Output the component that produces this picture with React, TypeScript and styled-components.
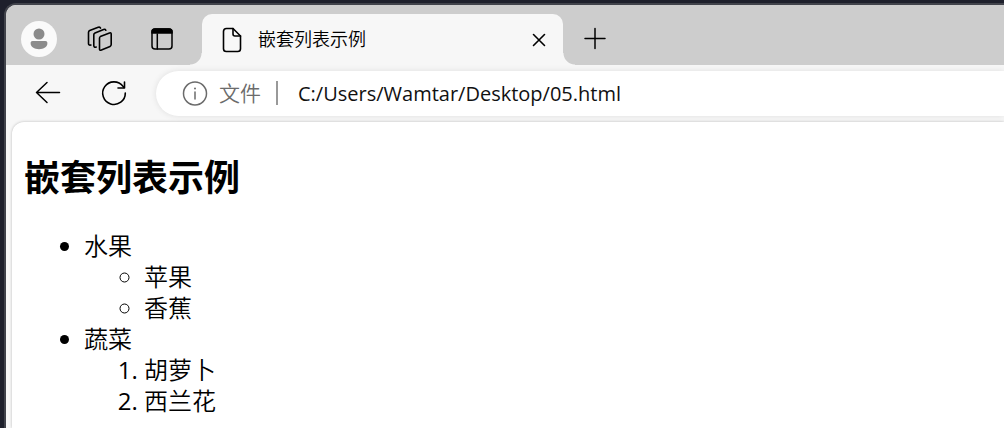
import React from "react";
import styled, { createGlobalStyle } from "styled-components";

const GlobalStyle = createGlobalStyle`
  *, *::before, *::after { box-sizing: border-box; }
  body {
    margin: 0;
    background: #1e202c;
    color: #000;
    font-family: "Open Sans", "Noto Sans CJK SC", sans-serif;
    font-weight: 350;
  }
`;

const Desktop = styled.div`
  display: flex;
  min-height: 100vh;
  padding: 3px 0 0 4px;
`;

const BrowserWindow = styled.div`
  flex: 1;
  min-width: 0;
  display: flex;
  flex-direction: column;
  overflow: hidden;
  border: 2px solid #41434b;
  border-width: 2px 0 0 2px;
  border-top-left-radius: 12px;
  background: #f7f7f7;
`;

const TabStrip = styled.header`
  display: flex;
  height: 60px;
  padding-left: 15px;
  background: #cdcdcd;
`;

const StripTools = styled.div`
  display: flex;
  gap: 25px;
  padding-top: 16px;
`;

const IconButton = styled.button<{ $size?: number }>`
  flex: none;
  display: grid;
  place-items: center;
  width: ${(p) => p.$size ?? 36}px;
  height: ${(p) => p.$size ?? 36}px;
  padding: 0;
  border: 0;
  background: none;
  color: #000;
`;

const Avatar = styled(IconButton)`
  border-radius: 50%;
  background: #fafafa;
`;

const Tab = styled.div`
  position: relative;
  flex: 0 1 361px;
  display: flex;
  align-items: center;
  gap: 14px;
  margin: 9px 14px 0 23px;
  padding: 0 12px 0 18px;
  border-radius: 10px 10px 0 0;
  background: #f7f7f7;

  &::before,
  &::after {
    content: "";
    position: absolute;
    bottom: 0;
    width: 12px;
    height: 12px;
  }
  &::before {
    right: 100%;
    background: radial-gradient(circle at 0 0, transparent 11px, #f7f7f7 12px);
  }
  &::after {
    left: 100%;
    background: radial-gradient(circle at 100% 0, transparent 11px, #f7f7f7 12px);
  }
`;

const TabTitle = styled.span`
  flex: 1;
  overflow: hidden;
  padding-bottom: 2px;
  white-space: nowrap;
  font-size: 18px;
  line-height: 24px;
`;

const NewTab = styled.div`
  padding-top: 15px;
`;

const Toolbar = styled.nav`
  display: flex;
  align-items: center;
  height: 57px;
  padding: 0 0 1px 24px;
`;

const NavButtons = styled.div`
  display: flex;
  gap: 30px;
  margin-right: 24px;
`;

const AddressBar = styled.label`
  flex: 1;
  min-width: 0;
  display: flex;
  align-items: center;
  height: 45px;
  padding-left: 26px;
  border-radius: 23px 0 0 23px;
  background: #fff;
  box-shadow: 0 0 6px rgba(0, 0, 0, 0.1);
`;

const Scheme = styled.span`
  margin-left: 11px;
  color: #6b6b6b;
  font-size: 21px;
  line-height: 30px;
`;

const Divider = styled.span`
  width: 2px;
  height: 24px;
  margin: 0 20px 0 15px;
  background: #999;
`;

const AddressInput = styled.input`
  flex: 1;
  min-width: 0;
  height: 30px;
  padding: 0;
  border: 0;
  outline: 0;
  background: none;
  color: #111;
  font-family: "Open Sans", "Noto Sans CJK SC", sans-serif;
  font-weight: 400;
  font-size: 20px;
`;

const Page = styled.main`
  flex: 1;
  margin-left: 6px;
  padding: 26px 12px 0;
  border-top-left-radius: 12px;
  background: #fff;
  box-shadow: 0 0 3px rgba(0, 0, 0, 0.25);
`;

const Heading = styled.h1`
  margin: 0 0 22px;
  font-size: 36px;
  line-height: 60px;
  font-weight: 700;
`;

const BulletList = styled.ul`
  margin: 0;
  padding-left: 60px;
  font-size: 24px;
  line-height: 31px;
`;

const NumberList = styled.ol`
  margin: 0;
  padding-left: 60px;

  li::marker {
    font-weight: 400;
  }
`;

const line = {
  fill: "none",
  stroke: "currentColor",
  strokeLinecap: "round" as const,
  strokeLinejoin: "round" as const,
};

const PersonIcon = () => (
  <svg width="36" height="36" viewBox="0 0 36 36" fill="#8b8b8b">
    <circle cx="18" cy="13" r="5.5" />
    <path d="M11.6 20h12.8c1.2 0 2 .8 2 2 0 4-3.6 6.2-8.4 6.2S9.6 26 9.6 22c0-1.200.8-2 2-2z" />
  </svg>
);

const WorkspacesIcon = () => (
  <svg width="36" height="36" viewBox="0 0 36 36" {...line} strokeWidth="1.600">
    <path d="M18.300 15.600l9.200-3.600q1.700-.6 1.700 1v10.600q0 1.300-1.200 1.800l-8.600 3.700q-1.900.7-1.900-1.100v-10.800q0-1.200.8-1.600z" />
    <path d="M14.200 26q-2.400.8-2.400-1.400v-10.800q0-1.400 1.200-1.900l8.600-3.500q1.600-.6 2.200.8" />
    <path d="M8.900 24q-2.400.6-2.400-1.500v-11q0-1.400 1.200-1.900l8.500-3.300q1.800-.6 2.300.8" />
  </svg>
);

const TabPanelIcon = () => (
  <svg width="36" height="36" viewBox="0 0 36 36" {...line} strokeWidth="1.500">
    <rect x="9" y="8" width="20" height="20" rx="3" />
    <path d="M9 12v-1a3 3 0 0 1 3-3h14a3 3 0 0 1 3 3v1z" fill="currentColor" />
    <path d="M14.300 13v15" />
  </svg>
);

const FileIcon = () => (
  <svg width="24" height="26" viewBox="0 0 24 26" {...line} strokeWidth="1.600">
    <path d="M6.500 1.500H13l7.500 7.500v12.700a2.800 2.800 0 0 1-2.800 2.800H6.300a2.800 2.800 0 0 1-2.800-2.800V4.500a3 3 0 0 1 3-3z" />
    <path d="M13 1.500V7a2 2 0 0 0 2 2h5.500" />
  </svg>
);

const CloseIcon = () => (
  <svg width="24" height="24" viewBox="0 0 24 24" {...line} strokeWidth="1.600">
    <path d="M6.500 6.500l11 11M17.500 6.500l-11 11" />
  </svg>
);

const PlusIcon = () => (
  <svg width="36" height="36" viewBox="0 0 36 36" {...line} strokeWidth="1.500">
    <path d="M18 8.500v20M8 18.500h20" />
  </svg>
);

const BackIcon = () => (
  <svg width="36" height="36" viewBox="0 0 36 36" {...line} strokeWidth="1.500">
    <path d="M29.500 17.500H6.500M17 7.500L6.500 17.500l10.500 10" />
  </svg>
);

const ReloadIcon = () => (
  <svg width="36" height="36" viewBox="0 0 36 36" {...line} strokeWidth="1.600">
    <path d="M29.300 18A11.300 11.300 0 1 1 27 11.300l1 1.200" />
    <path d="M28.500 7v6h-6.500" />
  </svg>
);

const InfoIcon = () => (
  <svg width="26" height="26" viewBox="0 0 26 26" {...line} stroke="#6b6b6b" strokeWidth="1.500">
    <circle cx="13" cy="13.500" r="11.500" />
    <path d="M13 12v7" />
    <circle cx="13" cy="8.500" r="1" fill="#6b6b6b" stroke="none" />
  </svg>
);

export default function App() {
  return (
    <>
      <GlobalStyle />
      <Desktop>
        <BrowserWindow>
          <TabStrip>
            <StripTools>
              <Avatar aria-label="个人资料"><PersonIcon /></Avatar>
              <IconButton aria-label="工作区"><WorkspacesIcon /></IconButton>
              <IconButton aria-label="标签操作菜单"><TabPanelIcon /></IconButton>
            </StripTools>
            <Tab>
              <FileIcon />
              <TabTitle>嵌套列表示例</TabTitle>
              <IconButton $size={24} aria-label="关闭标签页"><CloseIcon /></IconButton>
            </Tab>
            <NewTab>
              <IconButton aria-label="新建标签页"><PlusIcon /></IconButton>
            </NewTab>
          </TabStrip>
          <Toolbar>
            <NavButtons>
              <IconButton aria-label="返回"><BackIcon /></IconButton>
              <IconButton aria-label="刷新"><ReloadIcon /></IconButton>
            </NavButtons>
            <AddressBar>
              <InfoIcon />
              <Scheme>文件</Scheme>
              <Divider />
              <AddressInput type="text" spellCheck={false} defaultValue="C:/Users/Wamtar/Desktop/05.html" />
            </AddressBar>
          </Toolbar>
          <Page>
            <Heading>嵌套列表示例</Heading>
            <BulletList>
              <li>
                水果
                <BulletList>
                  <li>苹果</li>
                  <li>香蕉</li>
                </BulletList>
              </li>
              <li>
                蔬菜
                <NumberList>
                  <li>胡萝卜</li>
                  <li>西兰花</li>
                </NumberList>
              </li>
            </BulletList>
          </Page>
        </BrowserWindow>
      </Desktop>
    </>
  );
}
